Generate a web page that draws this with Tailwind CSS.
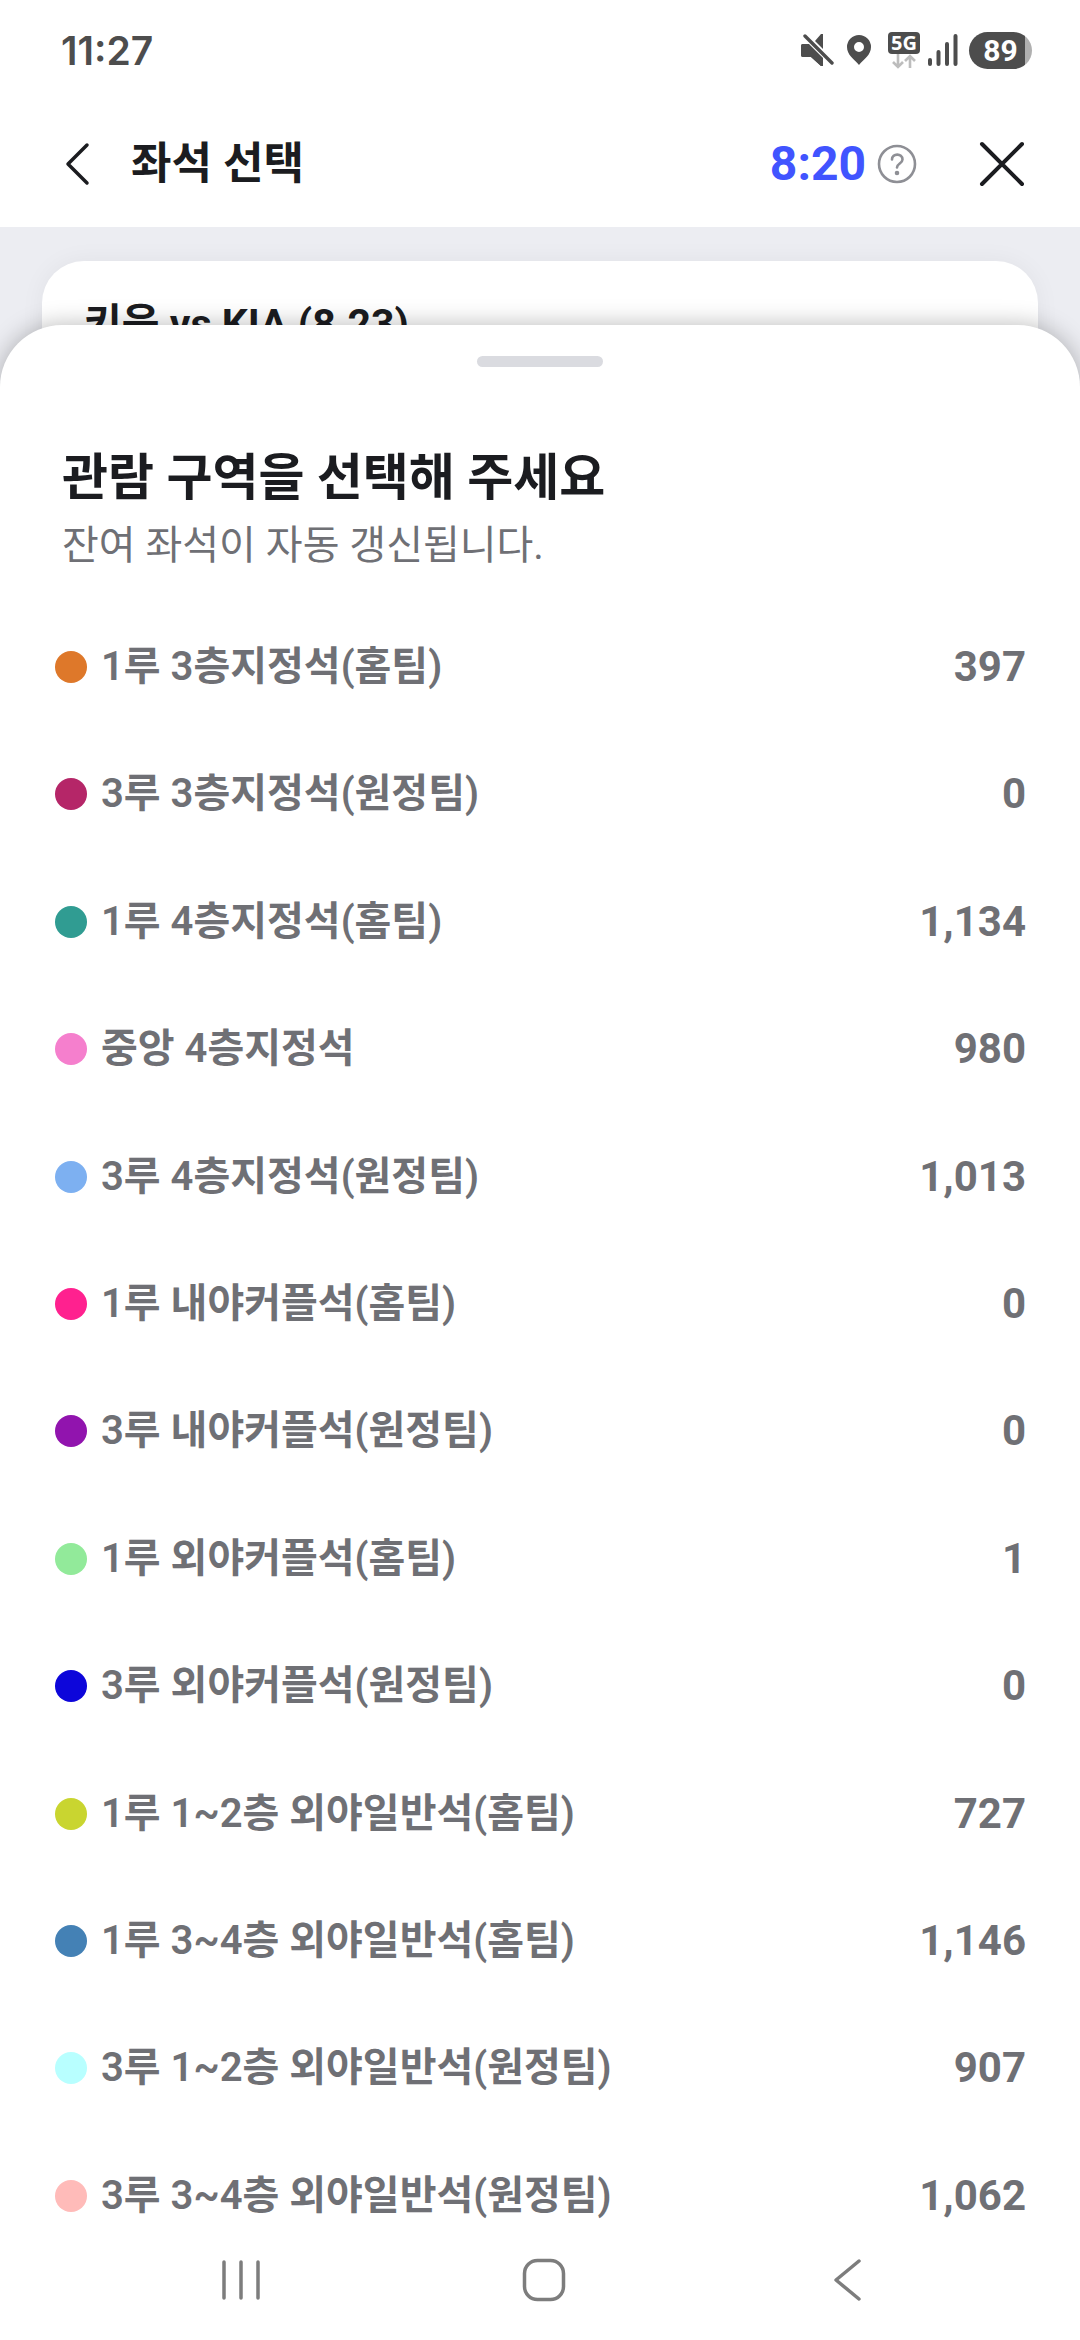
<!DOCTYPE html>
<html lang="ko">
<head>
    <meta charset="UTF-8">
    <meta name="viewport" content="width=device-width, initial-scale=1.0">
    <title>좌석 선택</title>
    <script src="https://cdn.jsdelivr.net/npm/@tailwindcss/browser@4"></script>
</head>
<body class="bg-[#ecedf2] font-[Roboto,'Noto_Sans_CJK_KR',sans-serif] text-[#1b1c20]">
    <div class="flex flex-col min-h-screen">
        <!-- Status bar -->
        <div class="flex items-center justify-between h-[100px] pl-[61px] pr-12 bg-white text-[#4d4d4d]">
            <span class="font-[Inter,sans-serif] text-[39px] font-semibold leading-none">11:27</span>
            <div class="flex items-center">
                <svg class="w-[34px] h-[34px]" viewBox="0 0 34 34" fill="currentColor">
                    <path d="M3 11h5l15 14v8h-2l-10-9H3a2 2 0 0 1-2-2v-9a2 2 0 0 1 2-2z"/>
                    <path d="M15 8l6-7h2v15z"/>
                    <path d="M5 3l27 27" fill="none" stroke="#fff" stroke-width="6"/>
                    <path d="M5 3l27 27" fill="none" stroke="currentColor" stroke-width="3.4" stroke-linecap="round"/>
                    <path d="M3 11h6l14 14v8h-2l-10-9H3a2 2 0 0 1-2-2v-9a2 2 0 0 1 2-2z"/>
                </svg>
                <svg class="w-[26px] h-[32px] ml-3" viewBox="0 0 26 32" fill="currentColor">
                    <path fill-rule="evenodd" d="M13 1a12 12 0 0 0-12 12c0 8 7 12 12 18 5-6 12-10 12-18A12 12 0 0 0 13 1zm0 7a5 5 0 1 1 0 10 5 5 0 0 1 0-10z"/>
                </svg>
                <div class="flex flex-col items-center ml-4">
                    <span class="w-8 h-[22px] rounded bg-[#4d4d4d] text-white text-center font-['Open_Sans',sans-serif] text-[20px] font-bold leading-[22px]">5G</span>
                    <svg class="w-7 h-[15px]" viewBox="0 0 28 15" fill="none" stroke="#bdbdbd" stroke-width="2.6">
                        <path d="M8 0v13M3 8l5 5 5-5M20 14V2M15 7l5-5 5 5"/>
                    </svg>
                </div>
                <svg class="w-[30px] h-[34px] ml-2" viewBox="0 0 30 34" stroke="currentColor" stroke-width="4" stroke-linecap="round">
                    <path d="M2 27v4M10.500 19v12M19 11v20M27.500 3v28"/>
                </svg>
                <span class="w-[63px] h-[37px] ml-[11px] rounded-full bg-linear-to-r from-[#4d4d4d] from-89% to-[#b0b0b0] to-89% text-white text-center font-[Roboto,sans-serif] text-[30px] font-bold leading-[37px]">89</span>
            </div>
        </div>

        <!-- Header -->
        <header class="flex items-center h-[127px] pl-[60px] pr-[50px] bg-white">
            <button type="button" aria-label="뒤로" class="mr-[37px]">
                <svg class="w-[34px] h-[44px]" viewBox="0 0 34 44" fill="none" stroke="currentColor" stroke-width="3.500" stroke-linecap="round" stroke-linejoin="round">
                    <path d="M27 3L8 22l19 19"/>
                </svg>
            </button>
            <h1 class="text-[44px] font-bold leading-none">좌석 선택</h1>
            <span class="ml-auto text-[48px] font-bold leading-none text-[#4154ff]">8:20</span>
            <button type="button" aria-label="도움말" class="ml-[11px]">
                <svg class="w-10 h-10" viewBox="0 0 40 40" fill="none" stroke="#8e8f95" stroke-width="2.600" stroke-linecap="round">
                    <circle cx="20" cy="20" r="18"/>
                    <path d="M15 15.500c0-6.500 10.500-6.500 10.500 0 0 4-5.500 4-5.500 8"/>
                    <circle cx="20" cy="29" r="1" fill="#8e8f95"/>
                </svg>
            </button>
            <button type="button" aria-label="닫기" class="ml-[57px]">
                <svg class="w-[56px] h-[56px]" viewBox="0 0 56 56" fill="none" stroke="currentColor" stroke-width="4" stroke-linecap="round">
                    <path d="M8 8l40 40M48 8L8 48"/>
                </svg>
            </button>
        </header>

        <!-- Game card behind the sheet -->
        <section class="h-[140px] mt-[34px] mx-[42px] px-[42px] pt-[39px] rounded-t-[42px] bg-white shadow-[0_0_24px_rgba(0,0,0,0.05)]">
            <h2 class="text-[41px] font-bold leading-[48px]">키움 vs KIA (8.23)</h2>
        </section>

        <!-- Bottom sheet -->
        <main class="relative flex flex-col grow -mt-[76px] rounded-t-[62px] bg-white shadow-[0_0_24px_rgba(0,0,0,0.28)]">
            <div class="w-[126px] h-[11px] mt-[31px] mx-auto rounded-full bg-[#dadbe0]"></div>
            <h2 class="mt-[79px] px-[62px] text-[50px] font-bold leading-[64px]">관람 구역을 선택해 주세요</h2>
            <p class="mt-2 px-[62px] text-[40px] leading-[56px] text-[#6f7075]">잔여 좌석이 자동 갱신됩니다.</p>

            <ul id="zones" class="flex flex-col grow justify-between mt-[69px] pl-[55px] pr-[54px] text-[#6f7075]"></ul>

            <!-- Navigation bar -->
            <nav class="grid grid-cols-3 items-center h-[120px] pl-[89px] pr-[82px] text-[#7d7d7d]">
                <button type="button" aria-label="최근 앱" class="mx-auto">
                    <svg class="w-[42px] h-[42px]" viewBox="0 0 42 42" stroke="currentColor" stroke-width="3.500" stroke-linecap="round">
                        <path d="M4 3v36M21 3v36M38 3v36"/>
                    </svg>
                </button>
                <button type="button" aria-label="홈" class="mx-auto">
                    <svg class="w-[44px] h-[44px]" viewBox="0 0 44 44" fill="none" stroke="currentColor" stroke-width="3.500">
                        <rect x="2.500" y="2.500" width="39" height="39" rx="13"/>
                    </svg>
                </button>
                <button type="button" aria-label="뒤로 가기" class="mx-auto">
                    <svg class="w-[30px] h-[44px]" viewBox="0 0 30 44" fill="none" stroke="currentColor" stroke-width="3.500" stroke-linecap="round" stroke-linejoin="round">
                        <path d="M27 3L4 22l23 19"/>
                    </svg>
                </button>
            </nav>
        </main>
    </div>

    <script>
        const zones = [
            { name: '1루 3층지정석(홈팀)', seats: 397, color: '#de782a' },
            { name: '3루 3층지정석(원정팀)', seats: 0, color: '#b52668' },
            { name: '1루 4층지정석(홈팀)', seats: 1134, color: '#309c92' },
            { name: '중앙 4층지정석', seats: 980, color: '#f57fcd' },
            { name: '3루 4층지정석(원정팀)', seats: 1013, color: '#7db0f1' },
            { name: '1루 내야커플석(홈팀)', seats: 0, color: '#ff218f' },
            { name: '3루 내야커플석(원정팀)', seats: 0, color: '#9114ae' },
            { name: '1루 외야커플석(홈팀)', seats: 1, color: '#92ea9a' },
            { name: '3루 외야커플석(원정팀)', seats: 0, color: '#0d06da' },
            { name: '1루 1~2층 외야일반석(홈팀)', seats: 727, color: '#c9d530' },
            { name: '1루 3~4층 외야일반석(홈팀)', seats: 1146, color: '#4481b5' },
            { name: '3루 1~2층 외야일반석(원정팀)', seats: 907, color: '#b8ffff' },
            { name: '3루 3~4층 외야일반석(원정팀)', seats: 1062, color: '#ffbbb9' }
        ];

        document.getElementById('zones').innerHTML = zones.map(zone => `
            <li>
                <button type="button" class="flex items-center w-full h-12">
                    <span class="w-8 h-8 rounded-full" style="background-color: ${zone.color}"></span>
                    <span class="ml-[14px] text-[40px] font-semibold leading-[48px]">${zone.name}</span>
                    <span class="ml-auto text-[42px] font-bold leading-[48px]">${zone.seats.toLocaleString('en-US')}</span>
                </button>
            </li>
        `).join('');
    </script>
</body>
</html>
